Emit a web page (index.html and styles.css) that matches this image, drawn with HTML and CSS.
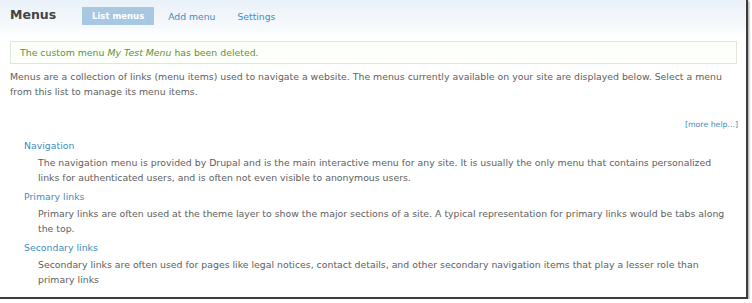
FILE: index.html
```html
<!DOCTYPE html>
<html>
<head>
<meta charset="utf-8">
<link rel="stylesheet" href="styles.css">
</head>
<body>
<div class="frame">
  <div class="header">
    <h1 class="title">Menus</h1>
    <ul class="tabs">
      <li class="tab active">List menus</li>
      <li class="tab first">Add menu</li>
      <li class="tab">Settings</li>
    </ul>
  </div>
  <div class="status">The custom menu <em>My Test Menu</em> has been deleted.</div>
  <p class="intro">Menus are a collection of links (menu items) used to navigate a website. The menus currently available on your site are displayed below. Select a menu<br>from this list to manage its menu items.</p>
  <div class="more"><a class="more-link">[more help...]</a></div>
  <dl class="menus">
    <dt class="menu-name">Navigation</dt>
    <dd class="menu-desc">The navigation menu is provided by Drupal and is the main interactive menu for any site. It is usually the only menu that contains personalized<br>links for authenticated users, and is often not even visible to anonymous users.</dd>
    <dt class="menu-name">Primary links</dt>
    <dd class="menu-desc">Primary links are often used at the theme layer to show the major sections of a site. A typical representation for primary links would be tabs along<br>the top.</dd>
    <dt class="menu-name">Secondary links</dt>
    <dd class="menu-desc">Secondary links are often used for pages like legal notices, contact details, and other secondary navigation items that play a lesser role than<br>primary links</dd>
  </dl>
</div>
</body>
</html>
```
FILE: styles.css
```css
html, body {
  margin: 0;
  padding: 0;
  background: #ffffff;
}
body {
  font-family: "DejaVu Sans", Verdana, sans-serif;
  font-size: 9.35px;
  color: #5e5e5e;
}
.frame {
  width: 746px;
  height: 297px;
  border-right: 2px solid #3c3c3c;
  border-bottom: 2px solid #3c3c3c;
  box-shadow: 1px 1px 2px #999;
  background: linear-gradient(#e9f1f9 0, #f6f9fc 26px, #ffffff 38px);
  overflow: hidden;
}
.header {
  display: flex;
  align-items: center;
  height: 33px;
  padding: 0 10px;
}
.title {
  margin: 0 0 4px 0;
  font-size: 12.5px;
  font-weight: bold;
  color: #444;
  width: 72px;
}
.tabs {
  display: flex;
  align-items: center;
  list-style: none;
  margin: 0 0 1px 0;
  padding: 0;
}
.tab {
  padding: 3px 11px;
  font-size: 9.25px;
  color: #3f8cbd;
}
.tab.first {
  margin-left: 3px;
}
.tab.active {
  background: #a7c7e2;
  color: #fff;
  font-weight: bold;
  font-size: 8.5px;
  padding: 4px 10px;
}
.status {
  margin: 8px 9px 0 10px;
  height: 21px;
  line-height: 21px;
  border: 1px solid #dfe7d6;
  background: #fcfffa;
  color: #5f9140;
  padding: 0 9px;
}
.status em {
  font-style: italic;
}
.intro {
  margin: 5px 0 0 10px;
  line-height: 15px;
  white-space: nowrap;
}
.more {
  display: flex;
  justify-content: flex-end;
  margin: 21px 8px 0 0;
}
.more-link {
  font-size: 7.8px;
  color: #3f8cbd;
}
.menus {
  margin: 9px 0 0 24px;
}
.menu-name {
  color: #3f8cbd;
  line-height: 16px;
  margin: 0;
}
.menu-desc {
  margin: 1px 0 4px 14px;
  line-height: 15px;
  white-space: nowrap;
}
```
